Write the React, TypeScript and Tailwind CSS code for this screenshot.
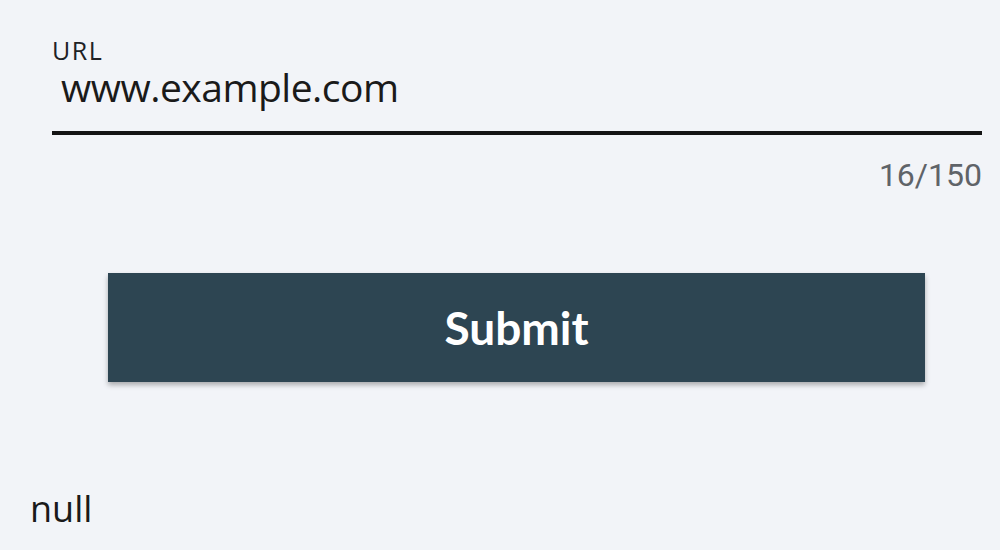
export default function App() {
  return (
    <div className="w-[1000px] h-[550px] bg-[#f2f4f8] overflow-hidden flex flex-col" style={{ fontFamily: "'Open Sans', 'Noto Sans', sans-serif" }}>
      <div className="pl-[52px] pr-[18px] pt-[38px]">
        <div className="text-[25px] leading-[24px] font-medium tracking-[1.5px] text-[#202124]">URL</div>
        <div className="mt-[5px] pl-[9px] text-[39px] leading-[40px] tracking-[-0.5px] text-[#1a1a1a]">www.example.com</div>
        <div className="mt-[24px] h-[4px] bg-[#141414]" />
        <div className="mt-[22px] text-right text-[32px] leading-[36px] text-[#5f6368]" style={{ fontFamily: "Roboto, sans-serif" }}>
          16/150
        </div>
      </div>
      <div className="pl-[108px] pr-[75px] mt-[80px]">
        <button
          className="w-full h-[109px] bg-[#2d4552] text-white text-[46px] font-bold shadow-[0_3px_5px_rgba(0,0,0,0.3)]"
          style={{ fontFamily: "Lato, sans-serif" }}
        >
          Submit
        </button>
      </div>
      <div className="pl-[30px] mt-[107px] text-[36px] leading-[40px] text-[#1a1a1a]">null</div>
    </div>
  );
}
